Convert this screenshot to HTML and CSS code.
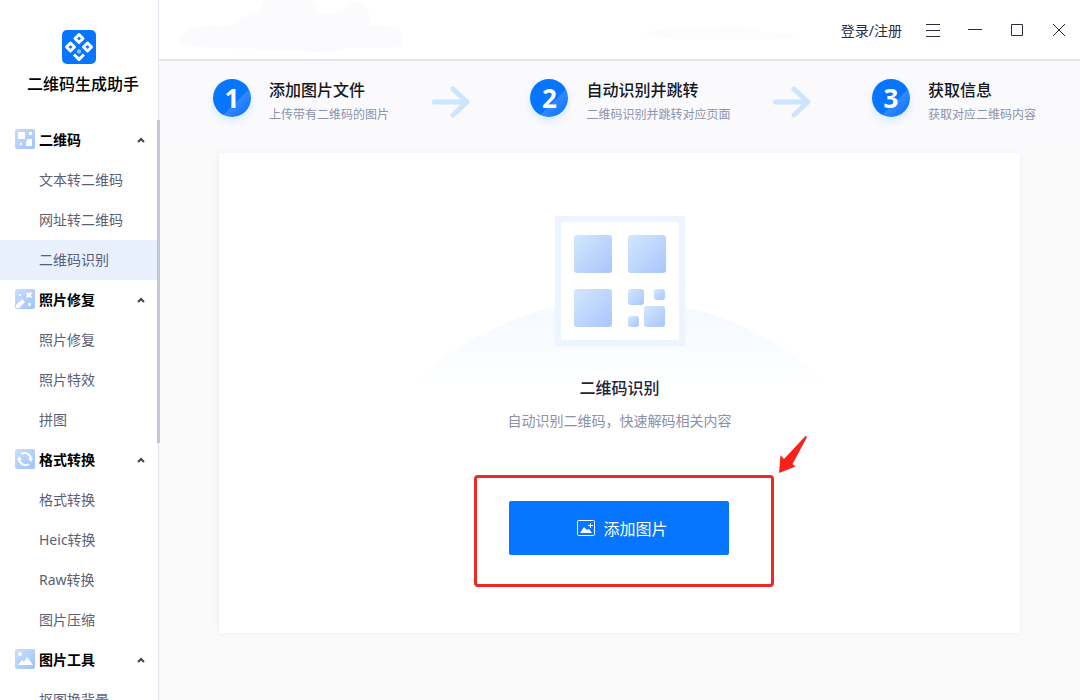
FILE: index.html
```html
<!DOCTYPE html>
<html lang="zh-CN">
<head>
    <meta charset="UTF-8">
    <meta name="viewport" content="width=device-width, initial-scale=1.0">
    <title>二维码生成助手</title>
    <link rel="stylesheet" href="styles.css">
</head>
<body>
    <aside class="sidebar">
        <div class="brand">
            <svg class="brand-logo" viewBox="0 0 34 34" aria-hidden="true">
                <rect width="34" height="34" rx="5" fill="#0675ff"/>
                <g fill="none" stroke="#fff" stroke-width="3" stroke-linejoin="round">
                    <path d="M17 4.500l4 4-4 4-4-4z"/>
                    <path d="M8.500 13l4 4-4 4-4-4z"/>
                    <path d="M25.500 13l4 4-4 4-4-4z"/>
                    <path d="M12 24.500l5 5 5-5"/>
                </g>
                <path d="M14 26l3 1 3-1-3 4z" fill="#fff"/>
                <circle cx="17" cy="21.500" r="2.200" fill="#8ec3ff"/>
            </svg>
            <h1 class="brand-name">二维码生成助手</h1>
        </div>

        <nav class="menu">
            <div class="menu-scroll"></div>
            <button class="menu-title" type="button">
                <svg class="menu-icon" viewBox="0 0 20 20" aria-hidden="true">
                    <rect width="20" height="20" rx="2" fill="url(#iconBlue)"/>
                    <path d="M3 3h7v7H3zM14 3h3v3h-3zM12 12v-2h5v7h-6v-5zM5 14h2v2H5z" fill="#fff"/>
                </svg>
                <span class="menu-text">二维码</span>
                <svg class="caret" viewBox="0 0 8 6" aria-hidden="true"><path d="M1 5l3-3 3 3"/></svg>
            </button>
            <a class="menu-item" href="#">文本转二维码</a>
            <a class="menu-item" href="#">网址转二维码</a>
            <a class="menu-item active" href="#">二维码识别</a>

            <button class="menu-title" type="button">
                <svg class="menu-icon" viewBox="0 0 20 20" aria-hidden="true">
                    <rect width="20" height="20" rx="2" fill="url(#iconBlue)"/>
                    <path d="M1 16l6-6 3 3-6 6H1zM11 3l3 1 3-1-1 3 1 3-3-1-3 1 1-3z" fill="#fff"/>
                    <path d="M4 5h2v2H4zM13 14h3v3h-3z" fill="#fff" opacity="0.800"/>
                </svg>
                <span class="menu-text">照片修复</span>
                <svg class="caret" viewBox="0 0 8 6" aria-hidden="true"><path d="M1 5l3-3 3 3"/></svg>
            </button>
            <a class="menu-item" href="#">照片修复</a>
            <a class="menu-item" href="#">照片特效</a>
            <a class="menu-item" href="#">拼图</a>

            <button class="menu-title" type="button">
                <svg class="menu-icon" viewBox="0 0 20 20" aria-hidden="true">
                    <rect width="20" height="20" rx="2" fill="url(#iconBlue)"/>
                    <g fill="none" stroke="#fff" stroke-width="2">
                        <path d="M6 5a6.500 6.500 0 0 1 10 5"/>
                        <path d="M14 15a6.500 6.500 0 0 1-10-5"/>
                    </g>
                    <path d="M13 9h5l-2 4zM2 11h5L4 7z" fill="#fff"/>
                </svg>
                <span class="menu-text">格式转换</span>
                <svg class="caret" viewBox="0 0 8 6" aria-hidden="true"><path d="M1 5l3-3 3 3"/></svg>
            </button>
            <a class="menu-item" href="#">格式转换</a>
            <a class="menu-item" href="#">Heic转换</a>
            <a class="menu-item" href="#">Raw转换</a>
            <a class="menu-item" href="#">图片压缩</a>

            <button class="menu-title" type="button">
                <svg class="menu-icon" viewBox="0 0 20 20" aria-hidden="true">
                    <rect width="20" height="20" rx="2" fill="url(#iconBlue)"/>
                    <path d="M3 16l4-5 2 2 3-5 6 8z" fill="#fff"/>
                    <circle cx="5" cy="5" r="2" fill="#fff"/>
                </svg>
                <span class="menu-text">图片工具</span>
                <svg class="caret" viewBox="0 0 8 6" aria-hidden="true"><path d="M1 5l3-3 3 3"/></svg>
            </button>
            <a class="menu-item" href="#">抠图换背景</a>
        </nav>
    </aside>

    <div class="content">
        <header class="topbar">
            <svg class="clouds" viewBox="0 0 920 58" aria-hidden="true">
                <path d="M20 40q4-11 16-12 14-5 26-2 18 0 20-9 16-1 20-10Q104 0 112 0h40q6 4 5 12 16 4 26 0 4-10 14-10 14 2 14 24 24-2 30 4 4 10 1 17-34 2-56 1-18 8-56 1-60 0-88-2-16 0-22-7z" fill="#fbfbfd"/>
                <path d="M484 33q24-6 66-4 26-6 54 3 30 0 34 6-30 3-80 2-44 2-74-7z" fill="#fcfcfd"/>
            </svg>
            <a class="login" href="#">登录/注册</a>
            <button class="win-btn" type="button" aria-label="菜单">
                <svg viewBox="0 0 14 14"><path d="M0 1.500h14M0 7.500h14M0 13.500h14"/></svg>
            </button>
            <button class="win-btn" type="button" aria-label="最小化">
                <svg viewBox="0 0 14 14"><path d="M0 6.500h14"/></svg>
            </button>
            <button class="win-btn" type="button" aria-label="最大化">
                <svg viewBox="0 0 14 14"><path d="M1.500 1.500h11v11h-11z"/></svg>
            </button>
            <button class="win-btn" type="button" aria-label="关闭">
                <svg viewBox="0 0 14 14"><path d="M1 1l12 12M13 1L1 13"/></svg>
            </button>
        </header>

        <main class="main">
            <div class="steps">
                <div class="step">
                    <span class="step-num">1</span>
                    <div>
                        <h2 class="step-title">添加图片文件</h2>
                        <p class="step-desc">上传带有二维码的图片</p>
                    </div>
                </div>
                <svg class="step-arrow" viewBox="0 0 38 32" aria-hidden="true"><path d="M2.500 16H33M21 3l14 13-14 13"/></svg>
                <div class="step">
                    <span class="step-num">2</span>
                    <div>
                        <h2 class="step-title">自动识别并跳转</h2>
                        <p class="step-desc">二维码识别并跳转对应页面</p>
                    </div>
                </div>
                <svg class="step-arrow" viewBox="0 0 38 32" aria-hidden="true"><path d="M2.500 16H33M21 3l14 13-14 13"/></svg>
                <div class="step">
                    <span class="step-num">3</span>
                    <div>
                        <h2 class="step-title">获取信息</h2>
                        <p class="step-desc">获取对应二维码内容</p>
                    </div>
                </div>
            </div>

            <section class="panel">
                <svg class="hero" viewBox="0 0 410 170" aria-hidden="true">
                    <defs>
                        <linearGradient id="iconBlue" x1="0" y1="0" x2="1" y2="1">
                            <stop offset="0" stop-color="#c6e0ff"/>
                            <stop offset="1" stop-color="#a3c1f8"/>
                        </linearGradient>
                        <linearGradient id="blockBlue" x1="0" y1="0" x2="1" y2="1">
                            <stop offset="0" stop-color="#d3e7ff"/>
                            <stop offset="1" stop-color="#a9c6fb"/>
                        </linearGradient>
                        <linearGradient id="hill" x1="0" y1="0" x2="0" y2="1">
                            <stop offset="0" stop-color="#f4f9ff"/>
                            <stop offset="1" stop-color="#fdfeff"/>
                        </linearGradient>
                    </defs>
                    <path d="M0 166Q90 84 205 84t205 82z" fill="url(#hill)"/>
                    <rect x="143" y="3" width="124" height="124" fill="#fff" stroke="#ebf4ff" stroke-width="6"/>
                    <g fill="url(#blockBlue)">
                        <rect x="159" y="19" width="38" height="38" rx="3"/>
                        <rect x="213" y="19" width="38" height="38" rx="3"/>
                        <rect x="159" y="73" width="38" height="38" rx="3"/>
                        <rect x="213" y="73" width="16" height="16" rx="3"/>
                        <rect x="239" y="73" width="11" height="11" rx="3"/>
                        <rect x="229" y="90" width="21" height="21" rx="3"/>
                        <rect x="213" y="100" width="11" height="11" rx="3"/>
                    </g>
                </svg>
                <h2 class="panel-title">二维码识别</h2>
                <p class="panel-desc">自动识别二维码，快速解码相关内容</p>
                <div class="highlight">
                    <button class="add-btn" type="button">
                        <svg class="add-icon" viewBox="0 0 18 16" aria-hidden="true">
                            <rect x=".5" y=".5" width="17" height="15" rx="1" fill="none" stroke="#fff"/>
                            <path d="M3 13l4-6 3 3 2-1 3 4z" fill="#fff"/>
                            <path d="M13.500 3v5M11 5.500h5" stroke="#fff"/>
                        </svg>
                        添加图片
                    </button>
                    <svg class="pointer" viewBox="0 0 30 40" aria-hidden="true">
                        <path d="M28.500 1q2 0 1 2L15.500 29l3 2.500L2 38l1.500-18 3.500 4z" fill="#f9221b"/>
                    </svg>
                </div>
            </section>
        </main>
    </div>
</body>
</html>
```
FILE: styles.css
```css
* {
    box-sizing: border-box;
}
body {
    margin: 0;
    height: 100vh;
    display: flex;
    overflow: hidden;
    font-family: "Noto Sans", "Noto Sans CJK SC", sans-serif;
    font-size: 14px;
    background-color: #fafafa;
}
h1, h2, p {
    margin: 0;
}
button {
    font-family: inherit;
    border: none;
    background: none;
    padding: 0;
    cursor: pointer;
}
a {
    text-decoration: none;
}

/* sidebar */
.sidebar {
    width: 159px;
    flex-shrink: 0;
    display: flex;
    flex-direction: column;
    background-color: #fff;
    border-right: 1px solid #e3e5ee;
}
.brand {
    height: 120px;
    flex-shrink: 0;
    padding-top: 30px;
    display: flex;
    flex-direction: column;
    align-items: center;
}
.brand-logo {
    width: 34px;
    height: 34px;
}
.brand-name {
    margin-top: 8px;
    padding-left: 8px;
    font-size: 16px;
    line-height: 24px;
    font-weight: 500;
    color: #000;
}
.menu {
    position: relative;
    flex: 1;
    min-height: 0;
}
.menu-scroll {
    position: absolute;
    top: 0;
    right: -2px;
    width: 3px;
    height: 323px;
    background-color: #c3c7d3;
}
.menu-title {
    width: 100%;
    height: 40px;
    padding: 0 13px 2px 15px;
    display: flex;
    align-items: center;
    gap: 4px;
    font-size: 14px;
    font-weight: bold;
    color: #000;
    text-align: left;
}
.menu-icon {
    width: 20px;
    height: 20px;
}
.menu-text {
    flex: 1;
}
.caret {
    width: 8px;
    height: 6px;
    margin-top: 2px;
    fill: none;
    stroke: #444;
    stroke-width: 2;
}
.menu-item {
    display: block;
    padding-left: 39px;
    line-height: 40px;
    color: #5b6075;
}
.menu-item.active {
    background-color: #e8effd;
}

/* right side */
.content {
    flex: 1;
    min-width: 0;
    display: flex;
    flex-direction: column;
}
.topbar {
    position: relative;
    height: 61px;
    flex-shrink: 0;
    padding-right: 14px;
    display: flex;
    align-items: center;
    justify-content: flex-end;
    gap: 28px;
    background-color: #fff;
    border-bottom: 2px solid #e3e4ec;
}
.clouds {
    position: absolute;
    top: 0;
    left: 0;
    width: 100%;
    height: 58px;
}
.login {
    position: relative;
    margin-right: -4px;
    color: #2a2c40;
}
.win-btn {
    position: relative;
    width: 14px;
    height: 14px;
}
.win-btn svg {
    display: block;
    overflow: visible;
    fill: none;
    stroke: #2a2c40;
    stroke-width: 1;
}
.main {
    flex: 1;
    display: flex;
    flex-direction: column;
}
.steps {
    height: 92px;
    padding: 16px 44px 0 54px;
    display: flex;
    align-items: flex-start;
    justify-content: space-between;
    background-color: #fafafd;
}
.step {
    display: flex;
    gap: 18px;
}
.step-num {
    width: 38px;
    height: 38px;
    margin-top: 2px;
    border-radius: 50%;
    background: linear-gradient(135deg, #0675ff 60%, #3389ff 62%, #1a7cff 80%);
    box-shadow: 0 4px 8px #d5e8ff;
    font-family: "Open Sans", "Noto Sans", sans-serif;
    font-size: 26px;
    line-height: 38px;
    font-weight: bold;
    text-align: center;
    color: #fff;
}
.step-title {
    font-size: 16px;
    line-height: 26px;
    font-weight: 500;
    color: #16171f;
}
.step-desc {
    font-size: 12px;
    line-height: 24px;
    color: #8b92ab;
}
.step-arrow {
    width: 38px;
    height: 32px;
    margin: 9px 18px 0 0;
    fill: none;
    stroke: #cde4ff;
    stroke-width: 5;
    stroke-linecap: round;
    stroke-linejoin: round;
}
.panel {
    margin: 0 60px;
    padding: 63px 0 46px;
    display: flex;
    flex-direction: column;
    align-items: center;
    background-color: #fff;
    box-shadow: 0 0 6px #eeeff3;
}
.hero {
    width: 410px;
    height: 170px;
    margin-bottom: -10px;
}
.panel-title {
    font-size: 16px;
    line-height: 24px;
    font-weight: 500;
    color: #22243a;
}
.panel-desc {
    margin-top: 10px;
    line-height: 22px;
    color: #8b92ab;
}
.highlight {
    position: relative;
    margin: 43px 0 0 8px;
    padding: 23px 42px 29px 32px;
    border: 3px solid #ea2a24;
    border-radius: 4px;
}
.add-btn {
    width: 220px;
    height: 54px;
    padding-left: 8px;
    display: flex;
    align-items: center;
    justify-content: center;
    gap: 8px;
    border-radius: 2px;
    background-color: #0675ff;
    font-size: 16px;
    color: #fff;
}
.add-icon {
    width: 18px;
    height: 16px;
}
.pointer {
    position: absolute;
    right: -36px;
    top: -43px;
    width: 30px;
    height: 40px;
}
```
